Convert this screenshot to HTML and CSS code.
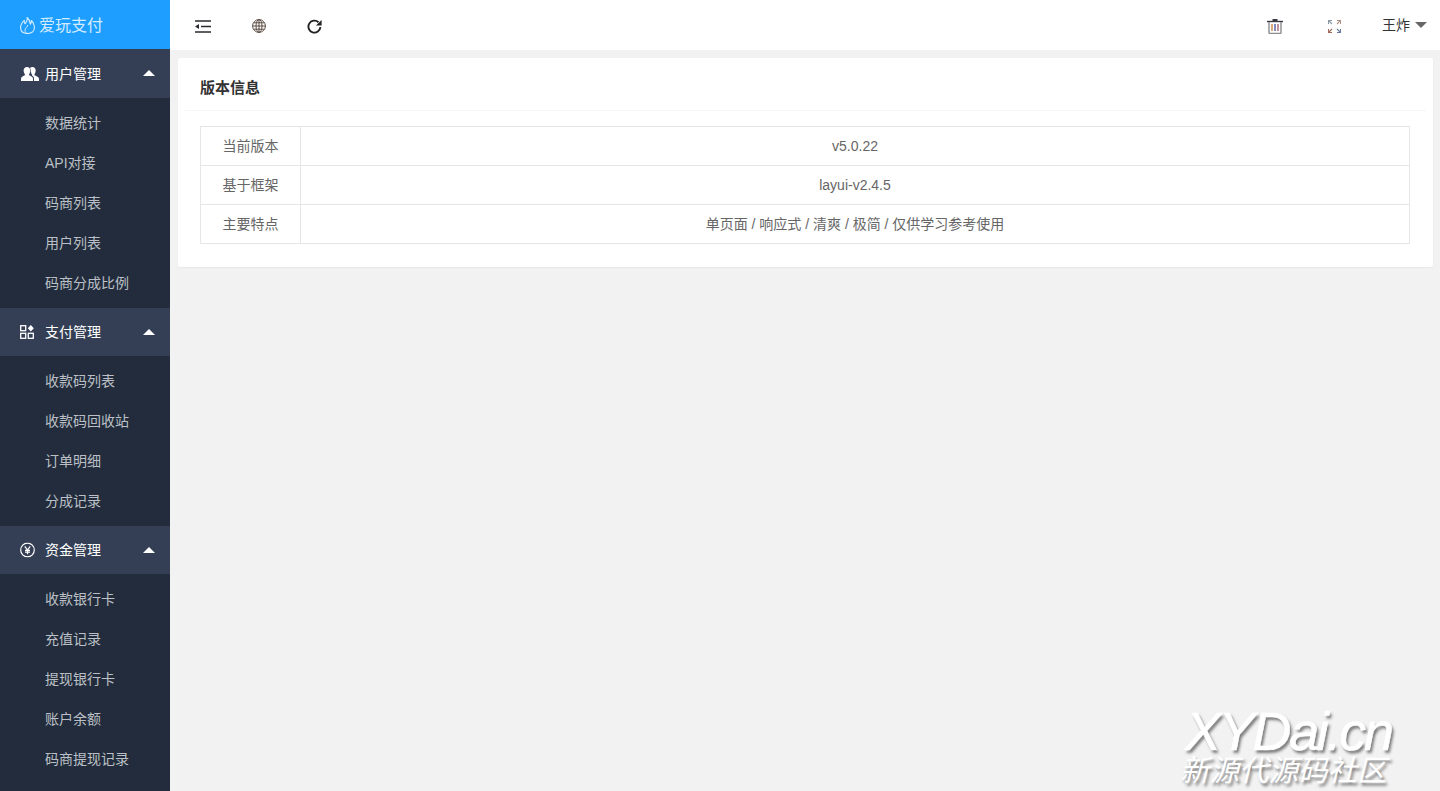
FILE: index.html
```html
<!DOCTYPE html>
<html lang="zh-CN">
<head>
<meta charset="utf-8">
<title>爱玩支付</title>
<link rel="stylesheet" href="styles.css">
</head>
<body>
<div class="app">
  <aside class="side">
    <div class="logo">
      <svg class="logo-icon" viewBox="0 0 15 17" width="15" height="17"><path d="M7 .5c1.100 2.900-.8 4.600-2 6.200C4.400 5.700 4.100 4.600 4.300 3.400 2 5.400.6 8 .6 10.800c0 3.500 2.700 5.700 6.800 5.700s7-2.200 7-5.700c0-3-1.400-5.800-3.100-7.300.2 1.500-.1 2.700-.9 3.600C10 4.700 9.100 2 7 .5Z" fill="none" stroke="#d4ecff" stroke-width="1.100" stroke-linejoin="round"/><path d="M7.800 8c-.2 2-2.800 3-2.800 5.400 0 1.300.7 2.400 1.800 3" fill="none" stroke="#d4ecff" stroke-width="1"/></svg>
      <span>爱玩支付</span>
    </div>
    <div class="menu">
      <div class="group-head first">
        <svg class="gicon users" viewBox="0 0 18 14" width="18" height="14"><path d="M0 14v-2.500c0-1.800 2-2.400 3.400-3.100.6-.3.700-.9.300-1.500C3 5.900 2.600 4.900 2.600 3.600 2.600 1.500 4 0 6 0s3.400 1.500 3.400 3.600c0 1.300-.4 2.300-1.100 3.300-.4.600-.3 1.200.3 1.500 1.400.7 3.400 1.300 3.400 3.100V14Z" fill="#fff"/><path d="M13 14v-2.800c0-1.300-1-2.200-2-2.800.2-.5 0-.9-.4-1.500-.5-.9-.7-1.800-.7-3 0-1.300-.4-2.400-1-3C9.500.3 10.500 0 11.400 0c2 0 3.300 1.500 3.300 3.600 0 1.300-.4 2.300-1 3.300-.4.600-.3 1.200.3 1.500 1.400.7 4 1.300 4 3.100V14Z" fill="#fff"/></svg>
        <span class="gtitle">用户管理</span><i class="up"></i>
      </div>
      <ul class="sub">
        <li>数据统计</li><li>API对接</li><li>码商列表</li><li>用户列表</li><li>码商分成比例</li>
      </ul>
      <div class="group-head">
        <svg class="gicon" viewBox="0 0 14 14" width="14" height="14"><rect x=".7" y=".7" width="5" height="5" fill="none" stroke="#fff" stroke-width="1.300"/><rect x=".7" y="8.300" width="5" height="5" fill="none" stroke="#fff" stroke-width="1.300"/><rect x="8.300" y="8.300" width="5" height="5" fill="none" stroke="#fff" stroke-width="1.300"/><path d="M10.800 0l3 3.200-3 3.200-3-3.200Z" fill="#fff"/></svg>
        <span class="gtitle">支付管理</span><i class="up"></i>
      </div>
      <ul class="sub">
        <li>收款码列表</li><li>收款码回收站</li><li>订单明细</li><li>分成记录</li>
      </ul>
      <div class="group-head">
        <svg class="gicon" viewBox="0 0 15 15" width="15" height="15"><circle cx="7.500" cy="7.500" r="6.800" fill="none" stroke="#fff" stroke-width="1.200"/><path d="M4.800 3.800l2.700 3.700 2.700-3.700M7.500 7.500v4.300M5 7.800h5M5 9.700h5" fill="none" stroke="#fff" stroke-width="1.200"/></svg>
        <span class="gtitle">资金管理</span><i class="up"></i>
      </div>
      <ul class="sub">
        <li>收款银行卡</li><li>充值记录</li><li>提现银行卡</li><li>账户余额</li><li>码商提现记录</li>
      </ul>
    </div>
  </aside>
  <main class="main">
    <header class="top">
      <div class="top-left">
        <svg viewBox="0 0 16 13" width="16" height="13"><path d="M0 1h16M6 6.500h10M0 12h16" stroke="#2a2a30" stroke-width="1.500" fill="none"/><path d="M4 4v5L0 6.500Z" fill="#2a2a30"/></svg>
        <svg viewBox="0 0 14 14" width="14" height="14"><g fill="none" stroke="#5a4d42" stroke-width="1"><circle cx="7" cy="7" r="6.400"/><ellipse cx="7" cy="7" rx="3" ry="6.400"/><path d="M7 .6v12.800M.6 7h12.800M1.600 3.800h10.800M1.600 10.200h10.800"/></g></svg>
        <svg viewBox="0 0 15 15" width="15" height="15"><path d="M13.400 8A6 6 0 1 1 11.500 3.200" fill="none" stroke="#222" stroke-width="1.900"/><path d="M14.600 1v5.600H9Z" fill="#222"/></svg>
      </div>
      <div class="top-right">
        <svg class="trash" viewBox="0 0 16 16" width="16" height="16"><path d="M0 3.500h16" stroke="#3a3a44" stroke-width="1.400"/><path d="M5.500 3V1h5v2" fill="#3a3a44"/><path d="M2 4v10.500c0 .6.400 1 1 1h10c.6 0 1-.4 1-1V4" fill="none" stroke="#8c8c90" stroke-width="1.400"/><path d="M5 6v7" stroke="#c47b3c" stroke-width="1.300"/><path d="M8 6v7" stroke="#444d9c" stroke-width="1.300"/><path d="M11 6v7" stroke="#a05a6a" stroke-width="1.300"/></svg>
        <svg class="full" viewBox="0 0 13 13" width="13" height="13"><g fill="none" stroke-width="1.100"><path d="M.5 4V.5H4M.5.5l3.500 3.500" stroke="#8a9aa8"/><path d="M9 .5h3.500V4M12.500.5l-3.500 3.500" stroke="#b09080"/><path d="M.5 9v3.500H4M.5 12.500l3.500-3.500" stroke="#a06a5a"/><path d="M9 12.500h3.500V9M12.500 12.500l-3.500-3.500" stroke="#6a7a9a"/></g></svg>
        <span class="user">王炸</span><i class="down"></i>
      </div>
    </header>
    <section class="content">
      <div class="card">
        <div class="card-head">版本信息</div>
        <div class="card-body">
          <table class="info">
            <tr><td class="k">当前版本</td><td>v5.0.22</td></tr>
            <tr><td class="k">基于框架</td><td>layui-v2.4.5</td></tr>
            <tr><td class="k">主要特点</td><td>单页面 / 响应式 / 清爽 / 极简 / 仅供学习参考使用</td></tr>
          </table>
        </div>
      </div>
    </section>
  </main>
  <div class="mark"><div class="mark-en">XYDai.cn</div><div class="mark-cn">新源代源码社区</div></div>
</div>
</body>
</html>
```
FILE: styles.css
```css
* { box-sizing: border-box; }
html, body { margin: 0; height: 100%; overflow: hidden; }
body { font: 14px/20px "Liberation Sans", "Noto Sans CJK SC", sans-serif; color: #666; background: #f2f2f2; }
.app { display: flex; height: 791px; position: relative; overflow: hidden; }
.side { width: 170px; flex: none; background: #222c3c; overflow: hidden; }
.logo { height: 49px; background: #1e9fff; display: flex; align-items: center; padding: 2px 0 0 20px; gap: 4px; color: #d4ecff; font-size: 16px; }
.logo-icon { flex: none; }
.group-head { height: 48px; background: #343f56; display: flex; align-items: center; position: relative; color: #fff; }
.group-head.first { height: 49px; }
.gicon { position: absolute; left: 20px; top: 50%; transform: translateY(-50%); }
.gicon.users { left: 21px; }
.gtitle { margin-left: 45px; }
.up { position: absolute; right: 15px; top: 21px; border: 6px solid transparent; border-top: 0; border-bottom-color: #fff; }
.sub { list-style: none; margin: 0; padding: 5px 0; }
.sub li { height: 40px; line-height: 40px; padding-left: 45px; color: #bcc0c6; }
.main { flex: 1; min-width: 0; display: flex; flex-direction: column; }
.top { height: 50px; background: #fff; display: flex; justify-content: space-between; align-items: center; flex: none; }
.top-left { display: flex; align-items: center; gap: 41px; padding: 2px 0 0 25px; }
.top-right { display: flex; align-items: center; padding-right: 13px; color: #333; }
.trash { margin: 2px 45px 0 0; }
.full { margin: 2px 41px 0 0; }
.down { margin-left: 5px; border: 6px solid transparent; border-bottom: 0; border-top-color: #666; }
.content { padding: 8px 7px 0 8px; }
.card { background: #fff; border-radius: 2px; box-shadow: 0 1px 2px rgba(0,0,0,.05); height: 209px; }
.card-head { height: 53px; line-height: 60px; margin: 0 7px; padding: 0 15px; border-bottom: 1px solid #f6f6f6; color: #333; font-size: 15px; font-weight: 700; }
.card-body { padding: 15px 23px 0 22px; }
.info { width: 100%; border-collapse: collapse; table-layout: fixed; }
.info td { border: 1px solid #e6e6e6; height: 39px; padding: 0; text-align: center; color: #666; }
.info .k { width: 100px; }
.mark { position: absolute; left: 1183px; top: 706px; color: #fff; pointer-events: none; white-space: nowrap; text-shadow: 2px 3px 3px rgba(0,0,0,.5); }
.mark-en { font: italic 54px/50px "Liberation Sans", sans-serif; letter-spacing: -2.300px; -webkit-text-stroke: .6px #fff; margin-left: 2px; }
.mark-cn { font: italic 29.500px/30px "Noto Sans CJK SC", sans-serif; margin: -3px 0 0 -3px; }
```
